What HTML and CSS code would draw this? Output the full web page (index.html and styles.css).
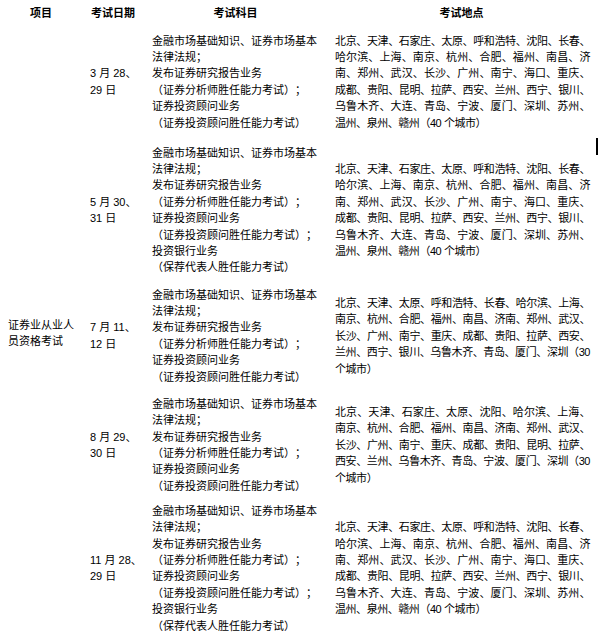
FILE: index.html
```html
<!DOCTYPE html>
<html lang="zh-CN">
<head>
<meta charset="utf-8">
<title>证券业从业人员资格考试</title>
<link rel="stylesheet" href="styles.css">
</head>
<body>
<table class="exam">
  <colgroup>
    <col class="c1"><col class="c2"><col class="c3"><col class="c4">
  </colgroup>
  <thead>
    <tr>
      <th>项目</th>
      <th>考试日期</th>
      <th>考试科目</th>
      <th>考试地点</th>
    </tr>
  </thead>
  <tbody>
    <tr class="r1">
      <td class="item" rowspan="5">证券业从业人员资格考试</td>
      <td class="date">3 月 28、<br>29 日</td>
      <td class="subj">金融市场基础知识、证券市场基本法律法规；<br>发布证券研究报告业务<br>（证券分析师胜任能力考试）；<br>证券投资顾问业务<br>（证券投资顾问胜任能力考试）</td>
      <td class="city">
        <span class="ln">北京、天津、石家庄、太原、呼和浩特、沈阳、长春、</span>
        <span class="ln">哈尔滨、上海、南京、杭州、合肥、福州、南昌、济</span>
        <span class="ln">南、郑州、武汉、长沙、广州、南宁、海口、重庆、</span>
        <span class="ln">成都、贵阳、昆明、拉萨、西安、兰州、西宁、银川、</span>
        <span class="ln">乌鲁木齐、大连、青岛、宁波、厦门、深圳、苏州、</span>
        <span class="ln last">温州、泉州、赣州（40 个城市）</span>
      </td>
    </tr>
    <tr class="r2">
      <td class="date">5 月 30、<br>31 日</td>
      <td class="subj">金融市场基础知识、证券市场基本法律法规；<br>发布证券研究报告业务<br>（证券分析师胜任能力考试）；<br>证券投资顾问业务<br>（证券投资顾问胜任能力考试）；<br>投资银行业务<br>（保荐代表人胜任能力考试）</td>
      <td class="city">
        <span class="ln">北京、天津、石家庄、太原、呼和浩特、沈阳、长春、</span>
        <span class="ln">哈尔滨、上海、南京、杭州、合肥、福州、南昌、济</span>
        <span class="ln">南、郑州、武汉、长沙、广州、南宁、海口、重庆、</span>
        <span class="ln">成都、贵阳、昆明、拉萨、西安、兰州、西宁、银川、</span>
        <span class="ln">乌鲁木齐、大连、青岛、宁波、厦门、深圳、苏州、</span>
        <span class="ln last">温州、泉州、赣州（40 个城市）</span>
      </td>
    </tr>
    <tr class="r3">
      <td class="date">7 月 11、<br>12 日</td>
      <td class="subj">金融市场基础知识、证券市场基本法律法规；<br>发布证券研究报告业务<br>（证券分析师胜任能力考试）；<br>证券投资顾问业务<br>（证券投资顾问胜任能力考试）</td>
      <td class="city">
        <span class="ln">北京、天津、太原、呼和浩特、长春、哈尔滨、上海、</span>
        <span class="ln">南京、杭州、合肥、福州、南昌、济南、郑州、武汉、</span>
        <span class="ln">长沙、广州、南宁、重庆、成都、贵阳、拉萨、西安、</span>
        <span class="ln">兰州、西宁、银川、乌鲁木齐、青岛、厦门、深圳（30</span>
        <span class="ln last">个城市）</span>
      </td>
    </tr>
    <tr class="r4">
      <td class="date">8 月 29、<br>30 日</td>
      <td class="subj">金融市场基础知识、证券市场基本法律法规；<br>发布证券研究报告业务<br>（证券分析师胜任能力考试）；<br>证券投资顾问业务<br>（证券投资顾问胜任能力考试）</td>
      <td class="city">
        <span class="ln">北京、天津、石家庄、太原、沈阳、哈尔滨、上海、</span>
        <span class="ln">南京、杭州、合肥、福州、南昌、济南、郑州、武汉、</span>
        <span class="ln">长沙、广州、南宁、重庆、成都、贵阳、昆明、拉萨、</span>
        <span class="ln">西安、兰州、乌鲁木齐、青岛、宁波、厦门、深圳（30</span>
        <span class="ln last">个城市）</span>
      </td>
    </tr>
    <tr class="r5">
      <td class="date">11 月 28、<br>29 日</td>
      <td class="subj">金融市场基础知识、证券市场基本法律法规；<br>发布证券研究报告业务<br>（证券分析师胜任能力考试）；<br>证券投资顾问业务<br>（证券投资顾问胜任能力考试）；<br>投资银行业务<br>（保荐代表人胜任能力考试）</td>
      <td class="city">
        <span class="ln">北京、天津、石家庄、太原、呼和浩特、沈阳、长春、</span>
        <span class="ln">哈尔滨、上海、南京、杭州、合肥、福州、南昌、济</span>
        <span class="ln">南、郑州、武汉、长沙、广州、南宁、海口、重庆、</span>
        <span class="ln">成都、贵阳、昆明、拉萨、西安、兰州、西宁、银川、</span>
        <span class="ln">乌鲁木齐、大连、青岛、宁波、厦门、深圳、苏州、</span>
        <span class="ln last">温州、泉州、赣州（40 个城市）</span>
      </td>
    </tr>
  </tbody>
</table>
<div class="caret"></div>
</body>
</html>
```
FILE: styles.css
```css
html, body {
  margin: 0;
  padding: 0;
  background: #ffffff;
}
body {
  position: relative;
  font-family: "Liberation Sans", "Noto Sans CJK SC", sans-serif;
  font-size: 11px;
  line-height: 16.4px;
  color: #000000;
  text-spacing-trim: space-all;
}
.exam {
  width: 596px;
  table-layout: fixed;
  border-collapse: collapse;
  border-spacing: 0;
}
.c1 { width: 82px; }
.c2 { width: 62px; }
.c3 { width: 183px; }
.c4 { width: 269px; }

.exam th {
  font-weight: bold;
  text-align: center;
  padding: 4.5px 0;
  vertical-align: middle;
}
.exam td {
  vertical-align: middle;
  text-align: left;
  padding-bottom: 0;
}
.r1 td { padding-top: 7.1px; }
.r2 td { padding-top: 13.6px; }
.r3 td { padding-top: 10.9px; }
.r4 td { padding-top: 10.6px; }
.r5 td { padding-top: 8.6px; }

.exam td.item {
  padding-left: 8px;
  padding-right: 6px;
}
.exam td.date {
  padding-left: 8px;
  padding-right: 0;
}
.exam td.subj {
  padding-left: 8px;
  padding-right: 9px;
}
.exam td.city {
  padding-left: 8px;
  padding-right: 6px;
  letter-spacing: -0.45px;
}
.ln {
  display: block;
  white-space: nowrap;
  text-align: justify;
  text-align-last: justify;
}
.ln.last {
  text-align: left;
  text-align-last: left;
}
.caret {
  position: absolute;
  left: 596px;
  top: 138px;
  width: 2px;
  height: 17px;
  background: #000000;
}
```
